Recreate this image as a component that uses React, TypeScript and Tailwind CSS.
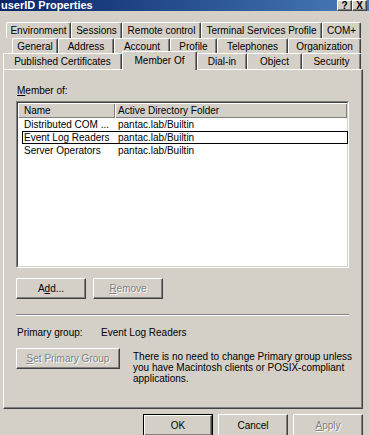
import React from "react";

const bevel =
  "border border-t-white border-l-white border-r-[#404040] border-b-[#404040] shadow-[inset_-1px_-1px_#808080] bg-[#d4d0c8]";
const disabled = "text-[#808080] [text-shadow:1px_1px_0_#ffffff]";

type TabDef = { label: string; w: string; selected?: boolean };

const row1: TabDef[] = [
  { label: "Environment", w: "w-[65px]" },
  { label: "Sessions", w: "w-[51px]" },
  { label: "Remote control", w: "w-[79px]" },
  { label: "Terminal Services Profile", w: "w-[121px]" },
  { label: "COM+", w: "w-[39px]" },
];
const row2: TabDef[] = [
  { label: "General", w: "w-[46px]" },
  { label: "Address", w: "w-[56px]" },
  { label: "Account", w: "w-[56px]" },
  { label: "Profile", w: "w-[47px]" },
  { label: "Telephones", w: "w-[71px]" },
  { label: "Organization", w: "w-[73px]" },
];
const row3: TabDef[] = [
  { label: "Published Certificates", w: "w-[119px]" },
  { label: "Member Of", w: "w-[75px]", selected: true },
  { label: "Dial-in", w: "w-[50px]" },
  { label: "Object", w: "w-[55px]" },
  { label: "Security", w: "w-[59px]" },
];

function Tab({ t }: { t: TabDef }) {
  if (t.selected) {
    return (
      <div
        className={`${t.w} relative z-10 h-[19px] -mb-[1px] flex items-start justify-center pt-[3px] bg-[#d4d0c8] border-t border-l border-white border-r border-r-[#404040] shadow-[inset_-1px_0_#808080] rounded-t-[2px]`}
      >
        {t.label}
      </div>
    );
  }
  return (
    <div
      className={`${t.w} h-full flex items-center justify-center pt-[1px] border-t border-l border-white border-r border-r-[#404040] shadow-[inset_-1px_0_#808080] rounded-t-[2px]`}
    >
      {t.label}
    </div>
  );
}

const rows = [
  { name: "Distributed COM ...", folder: "pantac.lab/Builtin", focus: false },
  { name: "Event Log Readers", folder: "pantac.lab/Builtin", focus: true },
  { name: "Server Operators", folder: "pantac.lab/Builtin", focus: false },
];

export default function App() {
  return (
    <div className="w-[369px] h-[435px] overflow-hidden bg-[#d4d0c8] font-['Liberation_Sans',Arial,sans-serif] text-[10px] leading-[12px] text-black">
      {/* Title bar */}
      <div className="h-[11px] flex justify-between items-center overflow-hidden bg-linear-to-r from-[#0a246a] to-[#4a7cb8]">
        <div className="pl-[1px] text-white font-bold text-[11px] leading-[11px]">userID Properties</div>
        <div className="flex mr-[2px]">
          <div className={`${bevel} w-[15px] h-[11px] flex items-center justify-center font-bold text-[10px] leading-[10px]`}>?</div>
          <div className={`${bevel} w-[15px] h-[11px] flex items-center justify-center font-bold text-[10px] leading-[10px]`}>X</div>
        </div>
      </div>

      {/* Tabs */}
      <div className="mt-[11px] flex ml-[6px] h-[16px]">
        {row1.map((t) => (
          <Tab key={t.label} t={t} />
        ))}
      </div>
      <div className="flex ml-[12px] h-[15px]">
        {row2.map((t) => (
          <Tab key={t.label} t={t} />
        ))}
      </div>
      <div className="flex ml-[3px] h-[16px] items-end">
        {row3.map((t) => (
          <Tab key={t.label} t={t} />
        ))}
      </div>

      {/* Panel */}
      <div className="ml-[3px] w-[360px] h-[340px] border border-t-white border-l-white border-r-[#404040] border-b-[#404040] shadow-[inset_-1px_-1px_#808080] flex flex-col pl-[12px]">
        <div className="mt-[15px] pl-[1px]">
          <u>M</u>ember of:
        </div>

        {/* List view */}
        <div className="mt-[4px] w-[333px] h-[167px] border border-t-[#808080] border-l-[#808080] border-r-white border-b-white">
          <div className="w-full h-full bg-white border border-t-[#404040] border-l-[#404040] border-r-[#d4d0c8] border-b-[#d4d0c8] flex flex-col">
            <div className="flex h-[15px] shrink-0">
              <div className="w-[97px] h-full flex items-center pl-[6px] bg-[#d4d0c8] shadow-[inset_1px_1px_#ffffff,inset_-1px_-1px_#808080]">
                Name
              </div>
              <div className="w-[232px] h-full flex items-center pl-[3px] bg-[#d4d0c8] shadow-[inset_1px_1px_#ffffff,inset_-1px_-1px_#808080]">
                Active Directory Folder
              </div>
              <div className="flex-1 h-full bg-[#d4d0c8] shadow-[inset_1px_1px_#ffffff,inset_-1px_-1px_#808080]" />
            </div>
            {rows.map((r) => (
              <div
                key={r.name}
                className={`ml-[4px] w-[326px] h-[13px] flex items-center border ${
                  r.focus ? "border-black" : "border-transparent"
                }`}
              >
                <div className="w-[95px] pl-[1px] whitespace-nowrap">{r.name}</div>
                <div className="whitespace-nowrap">{r.folder}</div>
              </div>
            ))}
          </div>
        </div>

        {/* Add / Remove */}
        <div className="mt-[10px] flex gap-[7px]">
          <div className={`${bevel} w-[70px] h-[21px] flex items-center justify-center`}>
            A<u>d</u>d...
          </div>
          <div className={`${bevel} w-[70px] h-[21px] flex items-center justify-center ${disabled}`}>
            <u>R</u>emove
          </div>
        </div>

        {/* Separator */}
        <div className="mt-[15px] w-[333px] border-t border-t-[#808080] border-b border-b-white" />

        {/* Primary group */}
        <div className="mt-[11px] flex pl-[1px]">
          <div className="w-[84px]">Primary group:</div>
          <div>Event Log Readers</div>
        </div>

        <div className="mt-[9px] flex items-start">
          <div className={`${bevel} w-[104px] h-[21px] shrink-0 flex items-center justify-center ${disabled}`}>
            <u>S</u>et Primary Group
          </div>
          <div className="ml-[13px] mt-[3px] leading-[11px] w-[225px]">
            There is no need to change Primary group unless you have Macintosh clients or POSIX-compliant applications.
          </div>
        </div>
      </div>

      {/* Dialog buttons */}
      <div className="mt-[5px] flex gap-[5px] ml-[143px]">
        <div className="w-[70px] h-[23px] border border-black">
          <div className={`${bevel} w-full h-full flex items-center justify-center`}>OK</div>
        </div>
        <div className={`${bevel} w-[70px] h-[23px] flex items-center justify-center`}>Cancel</div>
        <div className={`${bevel} w-[70px] h-[23px] flex items-center justify-center ${disabled}`}>
          <u>A</u>pply
        </div>
      </div>
    </div>
  );
}
